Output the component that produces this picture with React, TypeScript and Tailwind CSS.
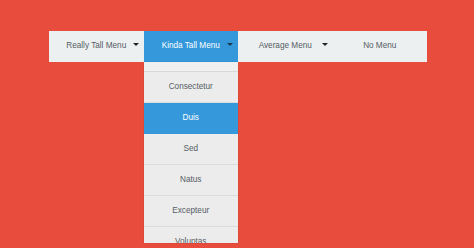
import React from "react";

const Arrow = ({ color }: { color: string }) => (
  <span
    className="absolute right-[5px] top-[12px] w-0 h-0 border-l-[3px] border-r-[3px] border-t-[3px] border-l-transparent border-r-transparent"
    style={{ borderTopColor: color }}
  />
);

const items = ["Consectetur", "Duis", "Sed", "Natus", "Excepteur", "Voluptas"];

export default function App() {
  return (
    <div
      className="w-[474px] h-[248px] bg-[#e74c3c] overflow-hidden pt-[31px] pl-[49px]"
      style={{ fontFamily: '"Liberation Sans", Arial, sans-serif' }}
    >
      <div className="flex w-[378px] h-[31px] bg-[#ecf0f1] text-[8.2px] text-[#555c63]">
        <div className="relative flex-1 flex items-center justify-center">
          Really Tall Menu
          <Arrow color="#222" />
        </div>
        <div className="relative flex-1 flex items-center justify-center bg-[#3498db] text-white">
          Kinda Tall Menu
          <Arrow color="#1a3a55" />
          <div className="absolute left-0 top-full w-full h-[181px] overflow-hidden bg-[#ececec] text-[#555c63] shadow-[0_0_1px_rgba(0,0,0,0.25)]">
            <div className="h-[10px] border-b border-[#d8d8d8] bg-[#efefef]" />
            {items.map((t) => (
              <div
                key={t}
                className={
                  "h-[31px] flex items-center justify-center border-b " +
                  (t === "Duis" ? "bg-[#3498db] text-white border-[#3498db]" : "bg-[#ececec] border-[#dcdcdc]")
                }
              >
                {t}
              </div>
            ))}
          </div>
        </div>
        <div className="relative flex-1 flex items-center justify-center">
          Average Menu
          <Arrow color="#222" />
        </div>
        <div className="relative flex-1 flex items-center justify-center">No Menu</div>
      </div>
    </div>
  );
}
